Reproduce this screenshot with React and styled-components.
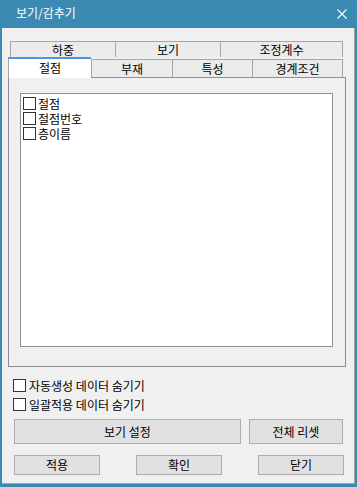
import React from 'react';
import styled, { createGlobalStyle } from 'styled-components';

const GlobalStyle = createGlobalStyle`
  html, body {
    margin: 0;
    padding: 0;
    background: #ffffff;
  }
  * {
    box-sizing: border-box;
  }
  body {
    font-family: "Noto Sans CJK KR", "Noto Sans", sans-serif;
    font-size: 12px;
    color: #000000;
  }
`;

const Window = styled.div`
  display: flex;
  flex-direction: column;
  width: 357px;
  height: 487px;
  background: #3a8ab4;
`;

const TitleBar = styled.div`
  display: flex;
  align-items: center;
  justify-content: space-between;
  height: 28px;
  padding: 0 10px 0 16px;
  color: #ffffff;
  font-size: 12px;
`;

const Title = styled.span`
  line-height: 1;
  margin-top: -2px;
`;

const CloseBtn = styled.div`
  display: flex;
  width: 10px;
  height: 10px;
  margin-top: -1px;
`;

const Body = styled.div`
  flex: 1;
  display: flex;
  flex-direction: column;
  margin: 0 2px 3px 2px;
  padding: 13px 0 0 0;
  background: #f0f0f0;
  border-right: 1px solid #a0a0a0;
  border-bottom: 1px solid #a0a0a0;
`;

const TabArea = styled.div`
  display: flex;
  flex-direction: column;
  margin-left: 6px;
  width: 338px;
`;

const TabRow = styled.div`
  display: flex;
  align-items: flex-end;
  height: ${p => p.$height}px;
  margin-left: ${p => p.$indent || 0}px;
`;

const Tab = styled.div`
  display: flex;
  align-items: center;
  justify-content: center;
  width: ${p => p.$width}px;
  height: ${p => p.$height}px;
  background: #ebebec;
  border: 1px solid #a6a6a6;
  border-right: none;
  border-bottom: none;
  line-height: 1;

  &:last-child {
    border-right: 1px solid #a6a6a6;
  }
`;

const ActiveTab = styled(Tab)`
  position: relative;
  z-index: 1;
  margin-bottom: -1px;
  background: #ffffff;
  border-top: 2px solid #4a97e4;
  padding-bottom: 1px;
`;

const Panel = styled.div`
  display: flex;
  height: 290px;
  padding: 15px 12px 19px 11px;
  background: #f0f0f0;
  border: 1px solid #8c8f96;
`;

const ListBox = styled.div`
  flex: 1;
  display: flex;
  flex-direction: column;
  padding: 2px 0 0 2px;
  background: #ffffff;
  border: 1px solid #8c8f96;
`;

const Item = styled.label`
  display: flex;
  align-items: center;
  gap: 2px;
  height: 15px;
  line-height: 1;
`;

const Box = styled.span`
  display: inline-block;
  width: 13px;
  height: 13px;
  flex: none;
  background: #ffffff;
  border: 1px solid #333333;
`;

const Options = styled.div`
  display: flex;
  flex-direction: column;
  margin: 9px 0 0 11px;
`;

const Option = styled.label`
  display: flex;
  align-items: center;
  gap: 3px;
  height: 19px;
  line-height: 1;
`;

const ButtonRow = styled.div`
  display: flex;
  justify-content: ${p => p.$spread ? 'space-between' : 'flex-start'};
  gap: ${p => p.$spread ? 0 : 8}px;
  margin: ${p => p.$top}px 0 0 12px;
  width: ${p => p.$width}px;
`;

const Button = styled.button`
  display: flex;
  align-items: center;
  justify-content: center;
  width: ${p => p.$width}px;
  height: ${p => p.$height}px;
  padding: 0;
  background: #e1e1e1;
  border: 1px solid #adadad;
  font-family: inherit;
  font-size: 12px;
  color: #000000;
  line-height: 1;
`;

const backTabs = [
  { label: '하중', width: 105 },
  { label: '보기', width: 105 },
  { label: '조정계수', width: 123 },
];

const frontTabs = [
  { label: '부재', width: 81 },
  { label: '특성', width: 80 },
  { label: '경계조건', width: 91 },
];

const items = ['절점', '절점번호', '층이름'];

export default function App() {
  return (
    <>
      <GlobalStyle />
      <Window>
        <TitleBar>
          <Title>보기/감추기</Title>
          <CloseBtn>
            <svg width="10" height="10" viewBox="0 0 10 10">
              <path d="M0.5 0.5 L9.5 9.5 M9.5 0.5 L0.5 9.5" stroke="#ffffff" strokeWidth="1.1" fill="none" />
            </svg>
          </CloseBtn>
        </TitleBar>
        <Body>
          <TabArea>
            <TabRow $height={16} $indent={2}>
              {backTabs.map(t => (
                <Tab key={t.label} $width={t.width} $height={16}>{t.label}</Tab>
              ))}
            </TabRow>
            <TabRow $height={20}>
              <ActiveTab $width={83} $height={21}>절점</ActiveTab>
              {frontTabs.map(t => (
                <Tab key={t.label} $width={t.width} $height={18}>{t.label}</Tab>
              ))}
            </TabRow>
            <Panel>
              <ListBox>
                {items.map(label => (
                  <Item key={label}>
                    <Box />
                    {label}
                  </Item>
                ))}
              </ListBox>
            </Panel>
          </TabArea>
          <Options>
            <Option><Box />자동생성 데이터 숨기기</Option>
            <Option><Box />일괄적용 데이터 숨기기</Option>
          </Options>
          <ButtonRow $top={5} $width={329}>
            <Button $width={227} $height={25}>보기 설정</Button>
            <Button $width={94} $height={25}>전체 리셋</Button>
          </ButtonRow>
          <ButtonRow $top={11} $width={330} $spread>
            <Button $width={86} $height={20}>적용</Button>
            <Button $width={86} $height={20}>확인</Button>
            <Button $width={86} $height={20}>닫기</Button>
          </ButtonRow>
        </Body>
      </Window>
    </>
  );
}
